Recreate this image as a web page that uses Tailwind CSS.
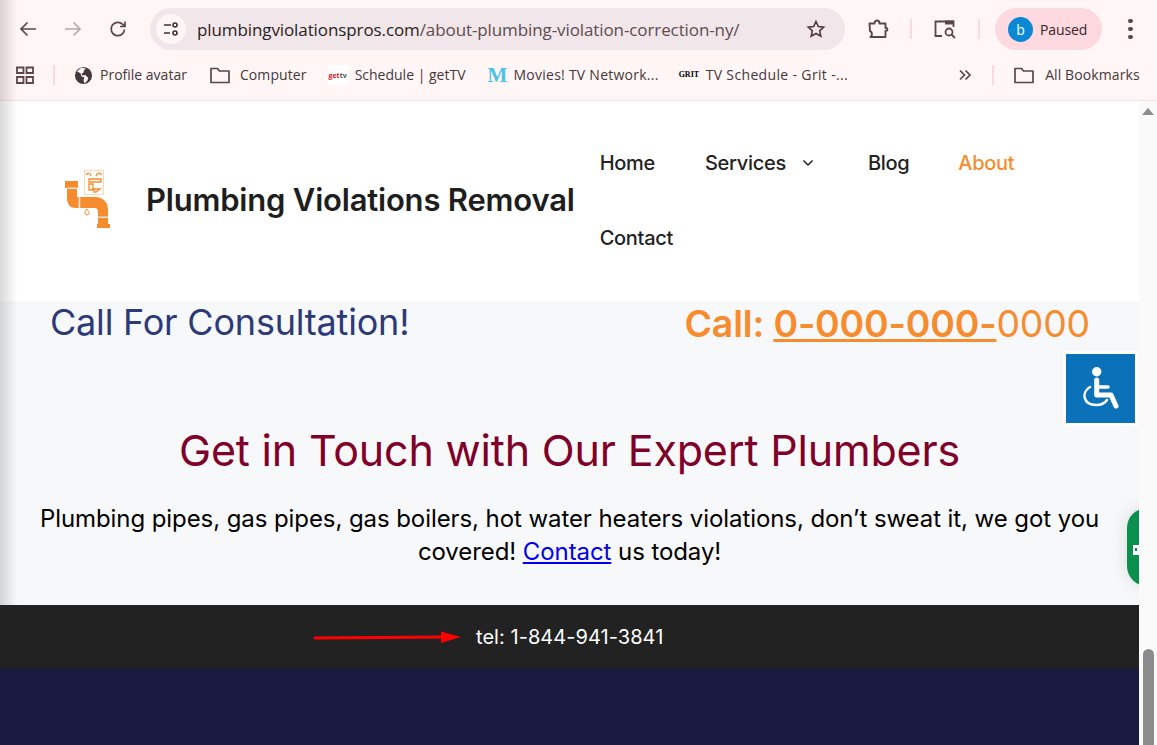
<!DOCTYPE html>
<html lang="en">
<head>
    <meta charset="UTF-8">
    <title>Plumbing Violations Removal</title>
    <script src="https://cdn.jsdelivr.net/npm/@tailwindcss/browser@4"></script>
</head>
<body class="w-[1157px] h-[745px] overflow-hidden bg-white relative font-['Inter',sans-serif]">
    <!-- Browser toolbar -->
    <div class="h-[101px] bg-[#fff6f5] border-b border-[#f9dfe2] font-['Open_Sans',sans-serif] text-[#5a4347]">
        <div class="h-[58px] flex items-center pl-[17px]">
            <svg class="w-[22px] h-[22px]" viewBox="0 0 22 22" fill="none" stroke="#5c4549" stroke-width="1.7"><path d="M19 11H4M10.500 4.500 4 11l6.500 6.500"/></svg>
            <svg class="w-[22px] h-[22px] ml-[23px]" viewBox="0 0 22 22" fill="none" stroke="#b7a7a9" stroke-width="1.7"><path d="M3 11h15M11.500 4.500 18 11l-6.500 6.500"/></svg>
            <svg class="w-[22px] h-[22px] ml-[23px]" viewBox="0 0 22 22" fill="none" stroke="#5c4549" stroke-width="1.7"><path d="M17.500 11.500a6.700 6.700 0 1 1-2-5.300L18 8.500M18 3.500v5h-5"/></svg>
            <div class="w-[695px] h-[42px] ml-[21px] rounded-full bg-[#f1e6e9] flex items-center pl-[6px]">
                <div class="w-[30px] h-[30px] rounded-full bg-[#fff6f5] flex items-center justify-center">
                    <svg class="w-[18px] h-[18px]" viewBox="0 0 18 18" fill="none" stroke="#3f2e32" stroke-width="1.600"><path d="M2 5h7M2 13h6"/><circle cx="13" cy="5" r="2"/><circle cx="13" cy="13" r="2"/></svg>
                </div>
                <span class="ml-[11px] mt-[1px] text-[17px] tracking-[-0.1px] whitespace-nowrap text-[#2b1d22]">plumbingviolationspros.com<span class="text-[#5f4c50]">/about-plumbing-violation-correction-ny/</span></span>
                <svg class="w-[20px] h-[20px] ml-auto mr-[19px]" viewBox="0 0 20 20" fill="none" stroke="#4f3a3e" stroke-width="1.600"><path d="M10 2.500l2.300 5 5.400.6-4 3.700 1.100 5.400-4.800-2.700-4.800 2.700 1.100-5.400-4-3.700 5.400-.6z"/></svg>
            </div>
            <svg class="w-[22px] h-[22px] ml-[22px]" viewBox="0 0 22 22" fill="none" stroke="#5c4549" stroke-width="1.900"><path d="M2.500 5.500h5c0-4 5-4 5 0h6v4.500c2.500 0 2.500 3 0 3V19H3.500c2-1.500 2-5-.5-6z" stroke-linejoin="round"/></svg>
            <div class="w-[2px] h-[20px] bg-[#fbd9df] ml-[21px]"></div>
            <svg class="w-[24px] h-[24px] ml-[21px]" viewBox="0 0 24 24" fill="none" stroke="#5c4549" stroke-width="1.800"><path d="M9 19H2.500V4.500h18V10"/><path d="M12 3.500h9v4h-9z" fill="#5c4549" stroke="none"/><circle cx="16" cy="15" r="3.500"/><path d="M18.500 17.500 22 21"/></svg>
            <div class="w-[2px] h-[20px] bg-[#fbd9df] ml-[21px]"></div>
            <div class="w-[107px] h-[42px] ml-[15px] rounded-full bg-[#fed9e0] flex items-center pl-[13px]">
                <div class="w-[25px] h-[25px] rounded-full bg-[#0b88d4] text-white text-[14px] flex items-center justify-center">b</div>
                <span class="ml-[7px] text-[14px] tracking-[-0.1px] text-[#3b2429]">Paused</span>
            </div>
            <div class="ml-[26px] flex flex-col gap-[3.500px]">
                <div class="w-[4.500px] h-[4.500px] rounded-full bg-[#5c4549]"></div>
                <div class="w-[4.500px] h-[4.500px] rounded-full bg-[#5c4549]"></div>
                <div class="w-[4.500px] h-[4.500px] rounded-full bg-[#5c4549]"></div>
            </div>
        </div>
        <div class="h-[34px] flex items-center pl-[15px] text-[14px] whitespace-nowrap text-[#45383c]">
            <svg class="w-[20px] h-[20px]" viewBox="0 0 20 20" fill="none" stroke="#5c4549" stroke-width="1.800"><path d="M2 2.500h6.500V8H2zM11.500 2.500H18V8h-6.500zM2 12h6.500v6H2zM11.500 12H18v6h-6.500z"/></svg>
            <div class="w-[2px] h-[20px] bg-[#fbd9df] ml-[18px]"></div>
            <svg class="w-[19px] h-[19px] ml-[19px]" viewBox="0 0 20 20"><circle cx="10" cy="10" r="9" fill="#45383c"/><path d="M3 5.500 7 8l1 3 3 1-1 3 1 3.500 3-3 1-3-3-3-3 .5-1-2 2-1 .5-2.500 2-1.500L8 1.500z" fill="#fff6f5"/></svg>
            <span class="ml-[7px] -mt-[2px]">Profile avatar</span>
            <svg class="w-[22px] h-[22px] ml-[22px]" viewBox="0 0 22 22" fill="none" stroke="#5c4549" stroke-width="1.700"><path d="M2 4.500h6.500l2 2.500H20v11.500H2z" stroke-linejoin="round"/></svg>
            <span class="ml-[9px] -mt-[2px] tracking-[0.1px]">Computer</span>
            <div class="w-[20px] h-[20px] ml-[21px] bg-white flex items-center justify-center text-[7px] font-bold leading-none"><span class="text-[#d4222a]">get</span><span class="text-[#555]">tv</span></div>
            <span class="ml-[7px] -mt-[2px]">Schedule | getTV</span>
            <span class="w-[18px] ml-[22px] text-[#49c2ee] text-[21px] leading-none font-bold font-['Liberation_Serif',serif]">M</span>
            <span class="ml-[8px] -mt-[2px] tracking-[0.25px]">Movies! TV Network...</span>
            <span class="w-[20px] ml-[20px] text-[8px] font-bold leading-none text-black font-['Liberation_Serif',serif]">GRIT</span>
            <span class="ml-[7px] -mt-[2px] tracking-[0.35px]">TV Schedule - Grit -...</span>
            <svg class="w-[14px] h-[14px] ml-[110px]" viewBox="0 0 14 14" fill="none" stroke="#5c4549" stroke-width="1.700"><path d="M2 2.500 6.500 7 2 11.500M7.500 2.500 12 7l-4.500 4.500"/></svg>
            <div class="w-[2px] h-[20px] bg-[#fbd9df] ml-[20px]"></div>
            <svg class="w-[22px] h-[22px] ml-[19px]" viewBox="0 0 22 22" fill="none" stroke="#5c4549" stroke-width="1.700"><path d="M2 4.500h6.500l2 2.500H20v11.500H2z" stroke-linejoin="round"/></svg>
            <span class="ml-[10px] -mt-[2px] tracking-[0.1px]">All Bookmarks</span>
        </div>
    </div>

    <div class="flex h-[644px]">
        <!-- Page -->
        <div class="w-[1139px] h-full overflow-hidden relative">
            <header class="h-[200px] bg-white flex">
                <svg class="w-[46px] h-[60px] ml-[65px] mt-[69px]" viewBox="0 0 46 60">
                    <path d="M0 11h13v7h-1v9h2v11h-4C5 38 2 34 2 28V18H0z" fill="#f68c2e"/>
                    <path d="M15 27h15c8 0 13 5 13 13v14h2v4H32v-4h1V42c0-2-1-4-3-4H15z" fill="#f68c2e"/>
                    <rect x="2" y="17.500" width="10" height="1.500" fill="#e7e2da"/><rect x="13.500" y="27" width="1.800" height="11" fill="#e7e2da"/><rect x="33" y="46.500" width="10" height="1.500" fill="#e7e2da"/>
                    <rect x="19.500" y="0.500" width="19" height="24" fill="#fff" stroke="#fbd9b5"/>
                    <path d="M21 5c2-3 4-2 5 1M31 6c1-3 4-4 6-1M24 9h12v3H24zM24 14h4v6h-4zM29 19h6l-4 3h-2z" fill="none" stroke="#f68c2e" stroke-width="1.300"/>
                    <path d="M22 39c1.500 2 2 3 2 4a2 2 0 0 1-4 0c0-1 .5-2 2-4z" fill="none" stroke="#f68c2e"/>
                </svg>
                <div class="ml-[35px] mt-[77px] text-[31px] leading-[44px] tracking-[-0.2px] font-semibold text-[#1e1e1e] whitespace-nowrap">Plumbing Violations Removal</div>
                <nav class="ml-[25px] w-[480px] flex flex-wrap content-start text-[20px] tracking-[-0.3px] font-medium text-[#222] pt-[24px]">
                    <a class="h-[75px] leading-[76px] mr-[50px]">Home</a>
                    <a class="h-[75px] leading-[76px] mr-[54px] flex items-center gap-[16px]">Services
                        <svg class="w-[12px] h-[8px] mt-[1px]" viewBox="0 0 12 8" fill="none" stroke="#222" stroke-width="1.500"><path d="M1.500 1.500 6 6l4.500-4.500"/></svg>
                    </a>
                    <a class="h-[75px] leading-[76px] mr-[49px]">Blog</a>
                    <a class="h-[75px] leading-[76px] text-[#f68c2e]">About</a>
                    <a class="h-[75px] leading-[76px] w-full">Contact</a>
                </nav>
            </header>

            <main class="h-[304px] bg-[#f7f8fa]">
                <div class="h-[49px] flex justify-between pl-[50px] pr-[49px]">
                    <div class="text-[36px] leading-[43px] tracking-[-0.2px] text-[#2d3a77]">Call For Consultation!</div>
                    <div class="text-[37.330px] leading-[45px] tracking-[-0.15px] text-[#f68c2e] whitespace-nowrap"><span class="font-semibold">Call: <a class="underline">0-000-000-</a></span>0000</div>
                </div>
                <h2 class="mt-[75px] text-center text-[43px] leading-[50px] tracking-[-0.18px] text-[#7f0029]">Get in Touch with Our Expert Plumbers</h2>
                <p class="mt-[27px] mx-auto w-[1080px] text-center text-[24px] leading-[33px] tracking-[-0.08px] text-black">Plumbing pipes, gas pipes, gas boilers, hot water heaters violations, don’t sweat it, we got you covered! <a class="text-[#0000ee] underline">Contact</a> us today!</p>
            </main>

            <div class="h-[64px] bg-[#222222] flex items-center">
                <svg class="w-[148px] h-[14px] ml-[313px]" viewBox="0 0 148 14"><path d="M2 8 130 7" stroke="#f00" stroke-width="3" stroke-linecap="round"/><path d="M128 1.500l20 5.500-20 6z" fill="#f00"/></svg>
                <span class="ml-[15px] text-[20px] tracking-[0.05px] text-white">tel: 1-844-941-3841</span>
            </div>
            <div class="h-[76px] bg-[#1a1a40]"></div>

            <!-- Floating widgets -->
            <div class="absolute left-[1063px] top-[250px] w-[75px] h-[75px] bg-white rounded-[3px] flex items-center justify-center">
                <div class="w-[69px] h-[69px] bg-[#0b72ba]">
                    <svg class="w-[69px] h-[69px]" viewBox="0 0 69 69" fill="none" stroke="#fff"><circle cx="30.700" cy="17.700" r="4.700" fill="#fff" stroke="none"/><path d="M30.700 26v15H45l5 11" stroke-width="5" stroke-linecap="round" stroke-linejoin="round"/><path d="M32 33h10" stroke-width="3.500" stroke-linecap="round"/><path d="M24 33c-9 5-7 18 6 18 5 0 9-2 11-5" stroke-width="2.500" stroke-linecap="round"/></svg>
                </div>
            </div>
            <div class="absolute left-[1127px] top-[407px] w-[40px] h-[78px] bg-[#0b8f4d] rounded-l-[20px] shadow-[0_0_18px_rgba(0,0,0,0.12)]">
                <div class="absolute left-[6px] top-[37px] w-[8px] h-[10px] bg-white"></div>
                <div class="absolute left-[8px] top-[40px] w-[2px] h-[3px] bg-[#0b8f4d]"></div>
            </div>
        </div>

        <!-- Scrollbar -->
        <div class="w-[18px] h-full bg-[#fafafa] relative">
            <div class="absolute left-[3px] top-[7px] w-0 h-0 border-l-[6px] border-r-[6px] border-b-[7px] border-l-transparent border-r-transparent border-b-[#8c8c8c]"></div>
            <div class="absolute left-[4px] top-[548px] w-[11px] h-[96px] bg-[#8c8c8c] rounded-t-full"></div>
        </div>
    </div>

    <!-- Left window shadow -->
    <div class="absolute left-0 top-0 w-[17px] h-[605px] bg-gradient-to-r from-black/15 to-transparent"></div>
</body>
</html>
